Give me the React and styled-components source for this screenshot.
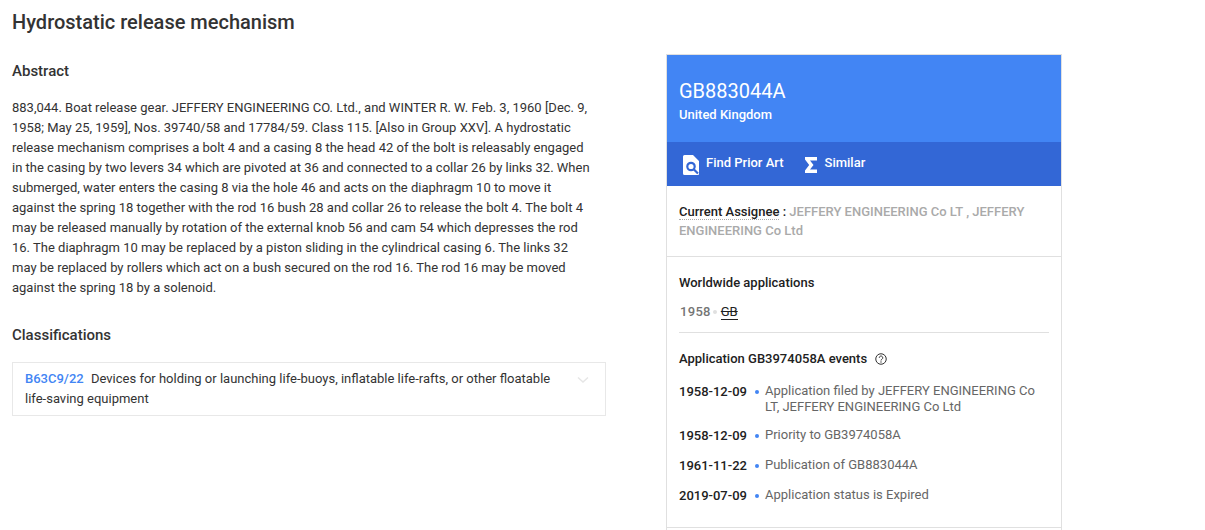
import React from "react";
import styled, { createGlobalStyle } from "styled-components";

const Global = createGlobalStyle`
  html, body { margin: 0; padding: 0; height: 530px; overflow: hidden; background: #fff; }
  body { font-family: Roboto, "Liberation Sans", sans-serif; color: #333; }
`;
const Page = styled.div`
  display: grid;
  grid-template-columns: 594px 396px;
  column-gap: 60px;
  padding: 0 0 0 12px;
  align-items: start;
`;
const Left = styled.main`
  display: flex;
  flex-direction: column;
`;
const Title = styled.h1`
  margin: 10px 0 0;
  font-size: 20px;
  line-height: 24px;
  font-weight: 500;
  color: #333;
`;
const SectionTitle = styled.h2`
  margin: ${(p) => p.$top}px 0 0;
  font-size: 15px;
  line-height: 20px;
  font-weight: 500;
  color: #333;
`;
const Abstract = styled.p`
  margin: 17px 0 0;
  width: 578px;
  font-size: 13px;
  line-height: 20px;
  color: #333;
`;
const ClassBox = styled.div`
  margin-top: 17px;
  display: flex;
  justify-content: space-between;
  box-sizing: border-box;
  width: 594px;
  padding: 6px 16px 6px 12px;
  border: 1px solid #e8e8e8;
  font-size: 13px;
  line-height: 20px;
  color: #333;
`;
const ClassText = styled.div`
  width: 530px;
`;
const Code = styled.span`
  color: #4285f4;
  font-weight: 500;
  margin-right: 4px;
`;
const Chevron = styled.svg`
  width: 12px;
  height: 8px;
  margin-top: 7px;
  flex: none;
`;
const Card = styled.aside`
  margin-top: 54px;
  border: 1px solid #e0e0e0;
  border-bottom: 0;
  box-sizing: border-box;
  width: 396px;
  height: 500px;
`;
const CardHead = styled.header`
  background: #4285f4;
  color: #fff;
  height: 87px;
  box-sizing: border-box;
  padding: 24px 12px 0;
`;
const PubNumber = styled.div`
  font-size: 20px;
  line-height: 24px;
`;
const Country = styled.div`
  font-size: 13px;
  line-height: 16px;
  font-weight: 500;
  margin-top: 4px;
`;
const ActionBar = styled.nav`
  background: #3367d6;
  height: 44px;
  display: flex;
  align-items: center;
  padding: 0 16px 4px;
  box-sizing: border-box;
  gap: 21px;
`;
const Action = styled.span`
  display: flex;
  align-items: center;
  gap: ${(p) => p.$gap}px;
  color: #fff;
  font-size: 13px;
  font-weight: 500;
`;
const ActionIcon = styled.svg`
  width: 16px;
  height: 20px;
  flex: none;
  margin-top: 5px;
`;
const SigmaIcon = styled.svg`
  width: 12px;
  height: 16px;
  flex: none;
  margin-top: 5px;
`;
const Assignee = styled.section`
  padding: 16px 12px 16px;
  font-size: 13px;
  line-height: 19px;
  font-weight: 500;
  color: #aaa;
  border-bottom: 1px solid #e0e0e0;
`;
const AssigneeLabel = styled.span`
  color: #212121;
  border-bottom: 1px dotted #aaa;
`;
const Colon = styled.span`
  color: #212121;
`;
const Worldwide = styled.section`
  margin: 0 12px;
  padding: 17px 0 11px;
  border-bottom: 1px solid #e0e0e0;
`;
const SmallHeading = styled.h3`
  display: flex;
  align-items: center;
  gap: 8px;
  margin: 0;
  font-size: 13px;
  line-height: 18px;
  font-weight: 500;
  color: #212121;
`;
const Years = styled.div`
  display: flex;
  align-items: center;
  margin-top: 11px;
  font-size: 13px;
  line-height: 18px;
  font-weight: 500;
  color: #757575;
  letter-spacing: 0.3px;
  padding-left: 1px;
`;
const Dot = styled.i`
  width: ${(p) => p.$size}px;
  height: ${(p) => p.$size}px;
  border-radius: 50%;
  background: ${(p) => p.$color};
  flex: none;
  margin: ${(p) => p.$margin};
`;
const Country2 = styled.span`
  color: #212121;
  text-decoration: line-through;
  border-bottom: 1px solid #212121;
  line-height: 14px;
  font-weight: 400;
  letter-spacing: 0;
`;
const Events = styled.section`
  padding: 17px 12px 0;
`;
const EventList = styled.div`
  display: flex;
  flex-direction: column;
  gap: 12px;
  margin-top: 15px;
`;
const EventRow = styled.div`
  display: flex;
  align-items: flex-start;
  font-size: 13px;
  line-height: 16px;
`;
const EventDate = styled.span`
  width: 68px;
  flex: none;
  font-weight: 500;
  line-height: 18px;
  color: #212121;
`;
const EventText = styled.span`
  color: #666;
`;
const HelpIcon = styled.svg`
  width: 12px;
  height: 12px;
`;
const CardEnd = styled.div`
  margin-top: 22px;
  margin-left: -12px;
  margin-right: -12px;
  border-top: 1px solid #e0e0e0;
`;

const events = [
  ["1958-12-09", "Application filed by JEFFERY ENGINEERING Co LT, JEFFERY ENGINEERING Co Ltd"],
  ["1958-12-09", "Priority to GB3974058A"],
  ["1961-11-22", "Publication of GB883044A"],
  ["2019-07-09", "Application status is Expired"],
];

export default function App() {
  return (
    <>
      <Global />
      <Page>
        <Left>
          <Title>Hydrostatic release mechanism</Title>
          <SectionTitle $top={27}>Abstract</SectionTitle>
          <Abstract>
            883,044. Boat release gear. JEFFERY ENGINEERING CO. Ltd., and WINTER R. W. Feb. 3, 1960 [Dec. 9, 1958; May 25, 1959], Nos. 39740/58 and 17784/59. Class 115. [Also in Group XXV]. A hydrostatic release mechanism comprises a bolt 4 and a casing 8 the head 42 of the bolt is releasably engaged in the casing by two levers 34 which are pivoted at 36 and connected to a collar 26 by links 32. When submerged, water enters the casing 8 via the hole 46 and acts on the diaphragm 10 to move it against the spring 18 together with the rod 16 bush 28 and collar 26 to release the bolt 4. The bolt 4 may be released manually by rotation of the external knob 56 and cam 54 which depresses the rod 16. The diaphragm 10 may be replaced by a piston sliding in the cylindrical casing 6. The links 32 may be replaced by rollers which act on a bush secured on the rod 16. The rod 16 may be moved against the spring 18 by a solenoid.
          </Abstract>
          <SectionTitle $top={27}>Classifications</SectionTitle>
          <ClassBox>
            <ClassText>
              <Code>B63C9/22</Code> Devices for holding or launching life-buoys, inflatable life-rafts, or other floatable life-saving equipment
            </ClassText>
            <Chevron viewBox="0 0 12 8">
              <path d="M1 1.5 L6 6 L11 1.5" fill="none" stroke="#e6e6e6" strokeWidth="1.5" />
            </Chevron>
          </ClassBox>
        </Left>
        <Card>
          <CardHead>
            <PubNumber>GB883044A</PubNumber>
            <Country>United Kingdom</Country>
          </CardHead>
          <ActionBar>
            <Action $gap={7}>
              <ActionIcon viewBox="0 0 16 20">
                <path d="M1.500 0H10l6 6v13l-.5 1H1.500A1.500 1.500 0 0 1 0 18.500v-17A1.500 1.500 0 0 1 1.500 0z" fill="#fff" />
                <circle cx="8" cy="11.500" r="3.700" fill="none" stroke="#3367d6" strokeWidth="2.200" />
                <path d="M10.500 14l4.500 4.500" stroke="#3367d6" strokeWidth="2.200" />
              </ActionIcon>
              Find Prior Art
            </Action>
            <Action $gap={8}>
              <SigmaIcon viewBox="0 0 12 16">
                <path d="M0 0h12v3.500H5L8.500 8 5 12.500h7V16H0v-2.500L4.200 8 0 2.500z" fill="#fff" />
              </SigmaIcon>
              Similar
            </Action>
          </ActionBar>
          <Assignee>
            <AssigneeLabel>Current Assignee</AssigneeLabel> <Colon>:</Colon> JEFFERY ENGINEERING Co LT , JEFFERY ENGINEERING Co Ltd
          </Assignee>
          <Worldwide>
            <SmallHeading>Worldwide applications</SmallHeading>
            <Years>
              1958
              <Dot $size={4} $color="#e0e0e0" $margin="0 4px 0 2px" />
              <Country2>GB</Country2>
            </Years>
          </Worldwide>
          <Events>
            <SmallHeading>
              Application GB3974058A events
              <HelpIcon viewBox="0 0 24 24">
                <circle cx="12" cy="12" r="10.500" fill="none" stroke="#333" strokeWidth="2" />
                <path d="M8.500 9.500a3.500 3.500 0 1 1 5.300 3c-1.200.7-1.800 1.300-1.800 2.500" fill="none" stroke="#333" strokeWidth="2" />
                <circle cx="12" cy="18" r="1.300" fill="#333" />
              </HelpIcon>
            </SmallHeading>
            <EventList>
              {events.map(([date, text], i) => (
                <EventRow key={i}>
                  <EventDate>{date}</EventDate>
                  <Dot $size={4} $color="#4285f4" $margin="7px 6px 0 8px" />
                  <EventText>{text}</EventText>
                </EventRow>
              ))}
            </EventList>
            <CardEnd />
          </Events>
        </Card>
      </Page>
    </>
  );
}
